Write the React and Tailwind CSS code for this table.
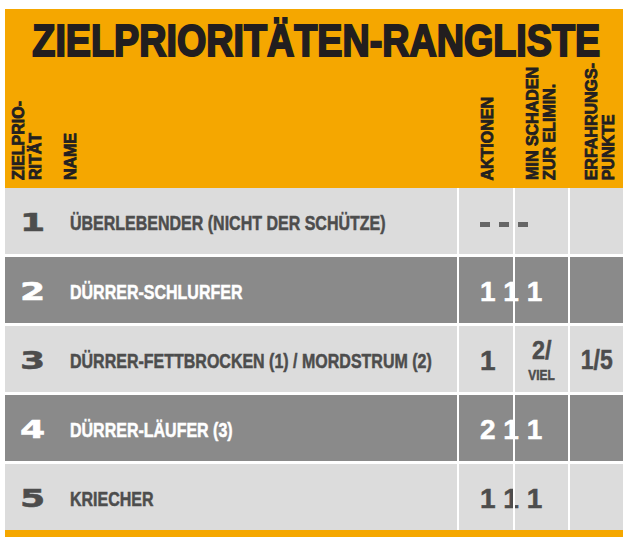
const rows = [
  { n: "1", name: "ÜBERLEBENDER (NICHT DER SCHÜTZE)", dark: false, act: "dash" },
  { n: "2", name: "DÜRRER-SCHLURFER", dark: true, act: "1 1 1" },
  { n: "3", name: "DÜRRER-FETTBROCKEN (1) / MORDSTRUM (2)", dark: false, act: "1", dmg: true, xp: "1/5" },
  { n: "4", name: "DÜRRER-LÄUFER (3)", dark: true, act: "2 1 1" },
  { n: "5", name: "KRIECHER", dark: false, act: "1 1 1" },
];

function VLabel({ children, className = "" }) {
  return (
    <div
      className={`[writing-mode:vertical-rl] rotate-180 text-[16px] leading-[17px] font-bold text-[#231f20] whitespace-nowrap [-webkit-text-stroke:0.8px_#231f20] ${className}`}
    >
      {children}
    </div>
  );
}

function Row({ row }) {
  const text = row.dark ? "text-white" : "text-[#4d4d4d]";
  const stroke = row.dark ? "[-webkit-text-stroke:0.5px_#ffffff]" : "[-webkit-text-stroke:0.5px_#4d4d4d]";
  return (
    <div className={`flex h-[66px] ${row.dark ? "bg-[#8a8a8a]" : "bg-[#dcdcdc]"} ${text}`}>
      <div className="w-[452px] shrink-0 flex items-center pt-[3px]">
        <div className="w-[65px] shrink-0 pl-[15px] pt-[2px]">
          <span
            className={`inline-block origin-left scale-x-[1.45] text-[25px] leading-none font-bold ${stroke}`}
            style={{ fontFamily: '"DejaVu Sans", sans-serif' }}
          >
            {row.n}
          </span>
        </div>
        <span className={`inline-block shrink-0 origin-left scale-x-[0.8] text-[20px] leading-none font-bold whitespace-nowrap ${stroke}`}>
          {row.name}
        </span>
      </div>
      <div className="w-[56px] shrink-0 border-l-2 border-white flex items-center pl-[21px] pt-[3px]">
        {row.act === "dash" ? (
          <div className="flex gap-[9px] mt-[4px]">
            <span className="w-[10px] h-[5px] bg-[#666666]" />
            <span className="w-[10px] h-[5px] bg-[#666666]" />
            <span className="w-[10px] h-[5px] bg-[#666666]" />
          </div>
        ) : (
          <span className={`text-[28px] leading-none font-bold whitespace-pre ${stroke}`}>{row.act}</span>
        )}
      </div>
      <div className="w-[55px] shrink-0 border-l-2 border-white flex flex-col items-center justify-center">
        {row.dmg && (
          <>
            <span className={`text-[26px] leading-none font-bold inline-block scale-x-[0.9] ${stroke}`}>2/</span>
            <span className={`text-[14px] leading-none font-bold mt-[5px] inline-block scale-x-[0.85] ${stroke}`}>VIEL</span>
          </>
        )}
      </div>
      <div className="w-[55px] shrink-0 border-l-2 border-white flex items-center justify-center pt-[3px]">
        {row.xp && (
          <span className={`text-[27px] leading-none font-bold inline-block scale-x-[0.85] ${stroke}`}>{row.xp}</span>
        )}
      </div>
    </div>
  );
}

export default function App() {
  return (
    <div
      className="min-h-[537px] bg-white pl-[5px] pt-[9px] overflow-hidden"
      style={{ fontFamily: '"Liberation Sans", Arial, sans-serif' }}
    >
      <div className="bg-[#f5a700] h-[179px] flex flex-col overflow-hidden">
        <div className="flex justify-center pt-[10px] pl-[4px]">
          <h1 className="inline-block whitespace-nowrap scale-x-[0.857] text-[44px] leading-none font-bold text-[#221e1f] [-webkit-text-stroke:2px_#221e1f]">
            ZIELPRIORITÄTEN-RANGLISTE
          </h1>
        </div>
        <div className="flex flex-1 items-end pb-[8px]">
          <div className="w-[452px] flex items-end pl-[5px] gap-[18px]">
            <VLabel>
              ZIELPRIO-
              <br />
              RITÄT
            </VLabel>
            <VLabel>NAME</VLabel>
          </div>
          <div className="w-[56px] flex justify-center pl-[4px]">
            <VLabel>AKTIONEN</VLabel>
          </div>
          <div className="w-[55px] flex justify-center">
            <VLabel>
              MIN SCHADEN
              <br />
              ZUR ELIMIN.
            </VLabel>
          </div>
          <div className="w-[55px] flex justify-center pl-[8px]">
            <VLabel className="leading-[16px]">
              ERFAHRUNGS-
              <br />
              PUNKTE
            </VLabel>
          </div>
        </div>
      </div>
      <div className="flex flex-col gap-[3px]">
        {rows.map((r) => (
          <Row key={r.n} row={r} />
        ))}
      </div>
      <div className="h-[8px] bg-[#f5a700]" />
    </div>
  );
}
